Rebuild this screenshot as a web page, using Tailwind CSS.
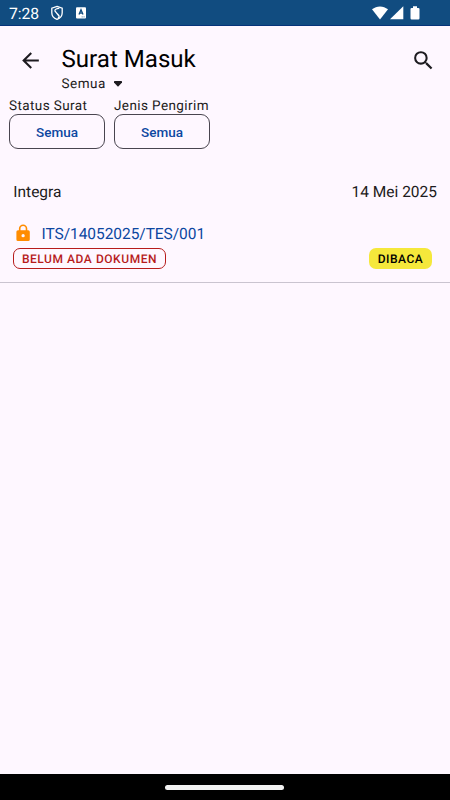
<!DOCTYPE html>
<html lang="id">
<head>
<meta charset="utf-8">
<title>Surat Masuk</title>
<script src="https://cdn.jsdelivr.net/npm/@tailwindcss/browser@4"></script>
</head>
<body class="font-[Roboto,sans-serif] [text-rendering:geometricPrecision]">
<div class="flex h-[800px] w-[450px] flex-col overflow-hidden bg-[#fef7ff] whitespace-nowrap text-[#1d1b20]">
  <div class="flex h-[26px] shrink-0 items-center border-b border-[#06337a] bg-[#114c80] pl-[9px] text-white">
    <span class="w-[42px] pt-[2px] text-[15.700px] leading-[20px] tracking-[-.1px]">7:28</span>
    <svg class="h-[16px] w-[12px]" viewBox="0 0 12 16" fill="none" stroke="#fff" stroke-width="1.3"><path d="M6 1.400 11.200 3.200v4.500c0 3.100-2.100 5.600-5.200 6.700C2.900 13.300.8 10.800.8 7.700V3.200z"/><path d="M8.300 3.500C6.200 3.200 3.700 4.300 3.900 5.800c.2 1.400 4.300 3.700 4.300 5.500 0 .8-.6 1.600-1.200 2.200M3.900 5.800l4.300 5.500"/></svg>
    <svg class="ml-[13px] h-[12px] w-[10px]" viewBox="0 0 10 12"><rect y=".3" width="10" height="11.200" rx="1" fill="#fff"/><path d="M3 7.600 5 2.800 7 7.600M3.700 6.200h2.600" fill="none" stroke="#114c80" stroke-width="1.300"/><path d="M5.700 9.900h.9M7.600 9.900h.9" stroke="#114c80" stroke-width=".8"/></svg>
    <svg class="ml-[285.500px] h-[14px] w-[49px]" viewBox="0 0 49 14" fill="#fff"><path d="M0 3.300C4.700-.6 11.300-.6 16 3.300L8 13.400z"/><path d="M31.300.2v13H18z"/><path d="M41 .3h4v1.600h1.300q1.200 0 1.200 1.200v9.200q0 1.200-1.200 1.200h-6.600q-1.200 0-1.200-1.200V3.100q0-1.200 1.200-1.200H41z"/></svg>
  </div>
  <header class="flex h-[72px] shrink-0">
    <svg class="mt-[22px] ml-[18px] size-[25px]" viewBox="0 0 24 24" fill="#1d1b20"><path d="M20 11H7.830l5.590-5.590L12 4l-8 8 8 8 1.410-1.410L7.830 13H20z"/></svg>
    <div class="ml-[18.500px] flex-1 pt-[17px]">
      <h1 class="text-[24.100px] leading-[32px] text-black">Surat Masuk</h1>
      <div class="flex items-center text-[13.500px] leading-[18px] tracking-[.5px]">Semua
        <svg class="ml-[8.500px] h-[6px] w-[8px]" viewBox="0 0 8 6"><path d="M.6 0h6.800q.6 0 .6.600v1L4.300 5.500h-.6L0 1.600v-1Q0 0 .6 0z" fill="#1d1b20"/></svg>
      </div>
    </div>
    <svg class="mt-[22px] mr-[14.500px] size-[25px]" viewBox="0 0 24 24" fill="#1d1b20"><path d="M15.500 14h-.79l-.28-.27A6.471 6.471 0 0 0 16 9.500 6.500 6.500 0 1 0 9.500 16c1.610 0 3.090-.59 4.230-1.570l.27.28v.79l5 4.990L20.490 19zm-6 0C7.010 14 5 11.990 5 9.500S7.010 5 9.500 5 14 7.010 14 9.500 11.990 14 9.500 14z"/></svg>
  </header>
  <section class="flex shrink-0 gap-[9px] pl-[9px]">
    <div class="w-[96px]">
      <div class="text-[13.500px] leading-[16px] tracking-[.4px]">Status Surat</div>
      <button class="flex h-[35px] w-full items-center justify-center rounded-[9px] border border-[#49454f] pt-px text-[13.500px] font-medium text-[#0d47a1]">Semua</button>
    </div>
    <div class="w-[96px]">
      <div class="text-[13.500px] leading-[16px] tracking-[.4px]">Jenis Pengirim</div>
      <button class="flex h-[35px] w-full items-center justify-center rounded-[9px] border border-[#49454f] pt-px text-[13.500px] font-medium text-[#0d47a1]">Semua</button>
    </div>
  </section>
  <article class="h-[134px] shrink-0 border-b border-[#cac4d0] px-[13px] pt-[33px]">
    <div class="flex justify-between pl-[.3px] text-[15.500px] leading-[20px]"><span>Integra</span><span>14 Mei 2025</span></div>
    <div class="mt-[21px] flex h-[22px] items-center">
      <svg class="mb-[2px] h-[18px] w-[20px]" viewBox="0 0 20 18"><path fill="#ff8c00" fill-rule="evenodd" d="M15.200 6.200H14.300V4.600a4.200 4.200 0 0 0-8.400 0v1.600H5A1.600 1.600 0 0 0 3.400 7.800v7.700A1.600 1.600 0 0 0 5 17.100h10.200a1.600 1.600 0 0 0 1.600-1.600V7.800a1.600 1.600 0 0 0-1.600-1.600zM7.500 4.600a2.600 2.600 0 0 1 5.200 0v1.600H7.500zM10.100 10a1.650 1.650 0 1 1 0 3.300 1.650 1.650 0 0 1 0-3.300z"/></svg>
      <span class="ml-[8.500px] text-[15.500px] leading-[20px] tracking-[-.05px] text-[#0d47a1]">ITS/14052025/TES/001</span>
    </div>
    <div class="mt-[3px] flex justify-between pr-[5px]">
      <span class="flex h-[21px] w-[153px] items-center justify-center rounded-[7px] border border-[#b71c1c] pt-px text-[12px] font-medium tracking-[.55px] text-[#b71c1c]">BELUM ADA DOKUMEN</span>
      <span class="flex h-[21px] w-[63px] items-center justify-center rounded-[7px] bg-[#f5e83b] pt-px text-[12px] font-medium tracking-[.5px] text-black">DIBACA</span>
    </div>
  </article>
  <main class="flex-1"></main>
  <footer class="flex h-[26px] shrink-0 items-center justify-center bg-black"><div class="mr-[1px] h-[5px] w-[119px] rounded-full bg-[#f2f2f2]"></div></footer>
</div>
</body>
</html>
